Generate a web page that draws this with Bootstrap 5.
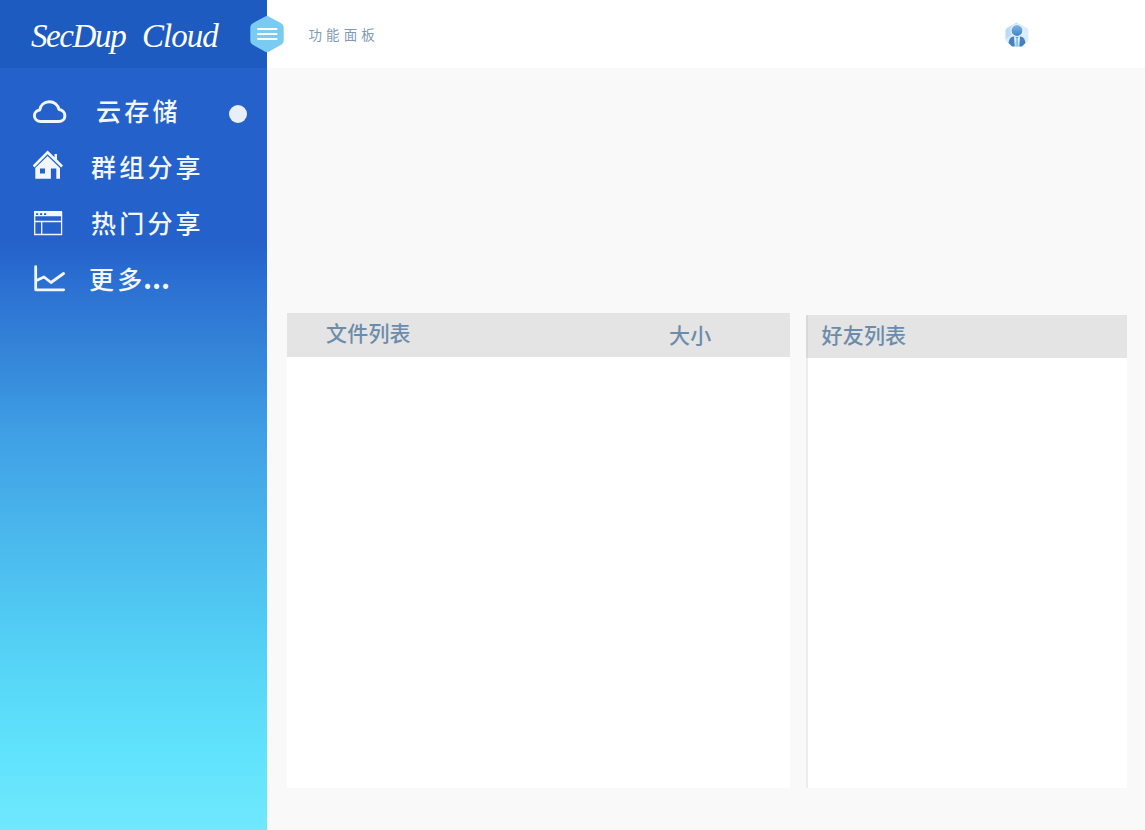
<!DOCTYPE html>
<html lang="zh-CN">
<head>
<meta charset="utf-8">
<meta name="viewport" content="width=device-width, initial-scale=1">
<title>SecDup Cloud</title>
<link href="https://cdn.jsdelivr.net/npm/bootstrap@5.3.0/dist/css/bootstrap.min.css" rel="stylesheet">
<style>
body{background:#f9f9f9;font-family:"Liberation Sans","Noto Sans CJK SC",sans-serif}
.sidebar{width:267px;background:linear-gradient(180deg,#2461ca 0,#2461ca 240px,#2b70d2 285px,#3484d8 350px,#3fa0e5 435px,#4ab6ec 530px,#50c9f3 613px,#58d7f7 680px,#5fe2fc 747px,#70e8fd 830px)}
.brand-bar{height:68px;background:#1e5bc1;padding-left:31px}
.brand-name{font-family:"Liberation Serif",serif;font-style:italic;font-size:33px;line-height:72px;height:68px;white-space:nowrap;color:#fff}
.brand-first{width:111px;letter-spacing:-1.4px}
.brand-second{letter-spacing:-1px}
.menu-list{padding-top:16px}
.menu-row{height:56px;padding-left:32px;padding-right:20.5px;color:#f2f6fd;text-decoration:none}
.menu-row svg{width:36px;height:36px;flex:none}
.menu-text{font-size:25px;font-weight:500;letter-spacing:3.2px;line-height:56px;height:56px;white-space:nowrap}
.menu-dots{font-family:"Noto Sans CJK SC",sans-serif;font-size:28px;font-weight:700;letter-spacing:-.1px;line-height:1;margin-left:-2.5px}
.dot{width:18px;height:18px;background:#e9eff9;margin-top:3px}
.topbar{height:68px;padding-left:41.5px;padding-right:116px}
.toggle-hex{left:249px;top:15px;width:36px;height:38px}
.panel-title{font-size:13.5px;letter-spacing:4.1px;color:#7f9bb3;line-height:68px;padding-top:3px}
.avatar{margin-top:2px}
.content-area{padding:245px 18px 41px 20px}
.panel-head{height:43.5px;background:#e4e4e4;color:#6b8cab;font-size:21px;font-weight:500;letter-spacing:.2px;line-height:42px}
.size-col{padding-top:2px}
.files{width:502.5px;height:475px}
.friends{width:321.5px;height:473px;margin-top:1.5px;border-left:2.500px solid #ececec}
.friends .panel-head{margin-left:-2px;border-left:2px solid #d9d9d9}
</style>
</head>
<body>
<div class="d-flex vh-100 overflow-hidden position-relative">
  <aside class="sidebar flex-shrink-0">
    <div class="brand-bar d-flex align-items-center">
      <div class="brand-name d-flex"><span class="brand-first">SecDup</span><span class="brand-second">Cloud</span></div>
    </div>
    <nav class="menu-list d-flex flex-column">
      <a href="#" class="menu-row d-flex align-items-center">
        <svg viewBox="0 0 36 36" fill="none" stroke="currentColor" stroke-width="3" stroke-linejoin="round"><path d="M9 27.500C4.800 27.500 2.400 24.700 2.400 21.800C2.400 18.300 5 16.300 7.700 16C8.500 11.200 12.200 7.800 17.300 7.800C22.200 7.800 25.900 10.900 27 15.500C30.300 15.900 32.900 18.300 32.900 21.700C32.900 25 30.200 27.500 26.600 27.500Z"/></svg>
        <span class="menu-text" style="margin-left:28px">云存储</span>
        <span class="dot rounded-circle ms-auto"></span>
      </a>
      <a href="#" class="menu-row d-flex align-items-center">
        <svg viewBox="0 0 36 36" fill="currentColor"><path d="M.700 15.600L15.600 .500L22.500 7.200V4H25V9.600L31 15.600L29.200 17.400L15.600 4.300L2.500 17.400Z"/><path fill-rule="evenodd" d="M3.300 18L15.600 5.900L28 18V28.800H24.300V18.500H18.900V28.800H3.300ZM8 18.500V23.500H13V18.500Z"/></svg>
        <span class="menu-text" style="margin-left:23px">群组分享</span>
      </a>
      <a href="#" class="menu-row d-flex align-items-center">
        <svg viewBox="0 0 36 36" fill="none" stroke="currentColor" stroke-width="1.300"><path d="M2.700 6.500H29.600V28.500H2.700ZM2.700 15.500H29.600M9.700 15.500V28.500"/><path fill="currentColor" stroke="none" fill-rule="evenodd" d="M2 5H30V10.300H2ZM4 6.500V9H6.200V6.500ZM8 6.500V9H10.200V6.500ZM12 6.500V9H14.200V6.500Z"/></svg>
        <span class="menu-text" style="margin-left:23px">热门分享</span>
      </a>
      <a href="#" class="menu-row d-flex align-items-center">
        <svg viewBox="0 0 36 36" fill="none" stroke="currentColor" stroke-width="2.800" stroke-linecap="round" stroke-linejoin="round"><path d="M3.700 4.600V27.800H31.700M4.500 18.500L12 15L19 20.500L31.600 11.500"/></svg>
        <span class="menu-text" style="margin-left:21px">更多<span class="menu-dots">...</span></span>
      </a>
    </nav>
  </aside>
  <main class="flex-grow-1">
    <header class="topbar bg-white d-flex align-items-center justify-content-between">
      <span class="panel-title">功能面板</span>
      <svg class="avatar" width="24" height="26" viewBox="0 0 24 26">
        <defs><linearGradient id="person" x2="0" y2="1"><stop stop-color="#80b8e8"/><stop offset="1" stop-color="#3f80c9"/></linearGradient></defs>
        <path d="M12 .5L22 6Q23.500 7 23.500 8.500V17.500Q23.500 19 22 20L12 25.500L2 20Q.5 19 .5 17.500V8.500Q.5 7 2 6Z" fill="#d9edfb"/>
        <path d="M12 .5L2 6Q.5 7 .5 8.500V17.500L12 9Z" fill="#bcdcf6"/>
        <path d="M3.500 21Q4.500 14.500 8.500 14.500H15.500Q19.500 14.500 20.500 21L17 24.500H7Z" fill="#4480c2"/>
        <path d="M9 14.500L12 16L15 14.500L14.200 25H9.800Z" fill="#dff2fc"/><path d="M11.200 16H12.800L13.700 24.500H10.300Z" fill="#8bc8ec"/>
        <circle cx="12" cy="8.500" r="6" fill="url(#person)" stroke="#e7f5fe" stroke-width="1.100"/>
      </svg>
    </header>
    <section class="content-area d-flex justify-content-between align-items-start">
      <div class="files bg-white">
        <div class="panel-head d-flex"><span style="margin-left:39px;width:343px">文件列表</span><span class="size-col">大小</span></div>
      </div>
      <div class="friends bg-white">
        <div class="panel-head"><span style="margin-left:14px">好友列表</span></div>
      </div>
    </section>
  </main>
  <svg class="toggle-hex position-absolute" viewBox="0 0 36 38" role="img" aria-label="菜单"><path d="M15.800 1.700Q18 .5 20.200 1.700L32.200 8.200Q34.700 9.600 34.700 12.300V25.700Q34.700 28.400 32.200 29.800L20.200 36.600Q18 37.800 15.800 36.600L3.800 29.800Q1.300 28.400 1.300 25.700V12.300Q1.300 9.600 3.800 8.200Z" fill="#7acbf2"/><path d="M9 14H27.500M9 19H27.500M9 24H27.500" stroke="#fff" stroke-width="2" stroke-linecap="round"/></svg>
</div>
<script src="https://cdn.jsdelivr.net/npm/bootstrap@5.3.0/dist/js/bootstrap.bundle.min.js"></script>
</body>
</html>
